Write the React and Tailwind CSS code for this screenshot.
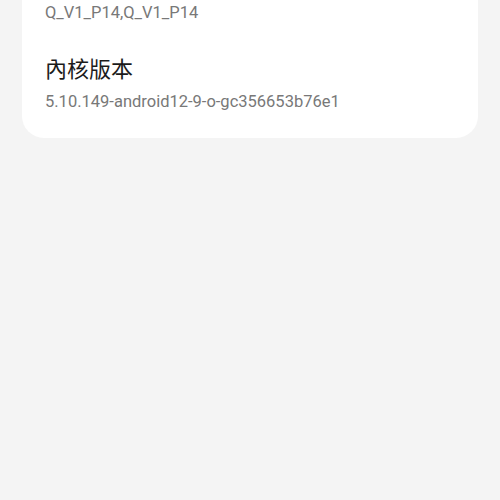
export default function App() {
  return (
    <div className="w-[500px] h-[500px] overflow-hidden bg-[#f4f4f4]" style={{ fontFamily: "Roboto, 'Noto Sans CJK TC', sans-serif" }}>
      <div className="mx-[22px] -mt-[40px] bg-white rounded-[22px] px-[23px] pt-[41px] pb-[24px]">
        <div className="text-[16.5px] leading-[24px] text-[#787878]">Q_V1_P14,Q_V1_P14</div>
        <div className="mt-[31px] text-[22px] leading-[28px] text-[#1b1b1b]">內核版本</div>
        <div className="mt-[6px] text-[16.5px] leading-[24px] text-[#787878]">5.10.149-android12-9-o-gc356653b76e1</div>
      </div>
    </div>
  );
}
